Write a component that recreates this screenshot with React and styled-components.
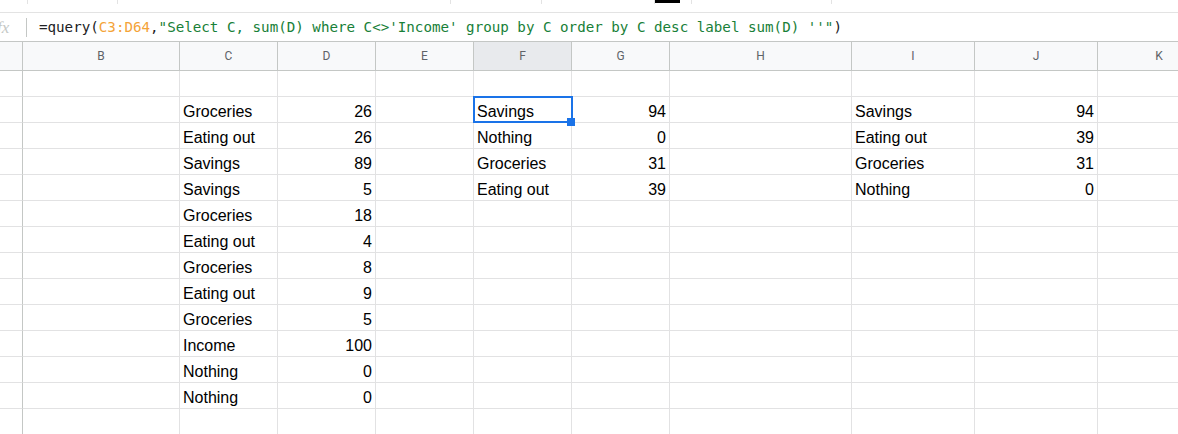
import React from 'react';
import styled, { createGlobalStyle } from 'styled-components';

const GlobalStyle = createGlobalStyle`
  html, body {
    margin: 0;
    padding: 0;
    background: #fff;
  }
`;

const Page = styled.div`
  width: 1178px;
  height: 434px;
  overflow: hidden;
  display: flex;
  flex-direction: column;
  background: #fff;
`;

// thin leftover of the toolbar above the formula bar
const TopStrip = styled.div`
  height: 13px;
  flex: none;
  box-sizing: border-box;
  border-bottom: 1px solid #e3e3e3;
  display: flex;
  align-items: flex-start;
`;

const Seg = styled.div`
  width: ${p => p.w}px;
  height: 4px;
  flex: none;
  box-sizing: border-box;
  border-right: 1px solid #e3e3e3;
`;

const Marker = styled.div`
  width: 25px;
  height: 3px;
  flex: none;
  background: #000;
`;

const FormulaBar = styled.div`
  height: 28px;
  flex: none;
  display: flex;
  align-items: center;
`;

const FxIcon = styled.span`
  width: 24px;
  flex: none;
  margin-left: -3px;
  font-family: "Liberation Serif", serif;
  font-style: italic;
  font-size: 17px;
  color: #c4c7c5;
  line-height: 1;
`;

const Divider = styled.div`
  width: 1px;
  height: 19px;
  background: #c4c7c5;
  margin: 0 12px 0 5px;
  flex: none;
`;

const Formula = styled.div`
  font-family: "DejaVu Sans Mono", "Liberation Mono", monospace;
  font-size: 14.2px;
  color: #202124;
  white-space: nowrap;
`;

const Tok = styled.span`
  color: ${p => (p.kind === 'range' ? '#f4a338' : p.kind === 'str' ? '#188038' : '#202124')};
`;

const Grid = styled.div`
  display: grid;
  grid-template-columns: 23px 157px 98px 98px 98px 98px 98px 182px 123px 123px 123px;
  grid-auto-rows: 26px;
  grid-template-rows: 30px;
`;

const HeadCell = styled.div`
  box-sizing: border-box;
  border-top: 1px solid #c4c7c5;
  border-bottom: 1px solid #c4c7c5;
  border-right: 1px solid #c4c7c5;
  background: ${p => (p.active ? '#e8eaed' : '#f8f9fa')};
  display: flex;
  align-items: center;
  justify-content: center;
  font-family: Roboto, "Liberation Sans", sans-serif;
  font-size: 12px;
  color: #5f6368;
`;

const Cell = styled.div`
  position: relative;
  box-sizing: border-box;
  border-right: 1px solid ${p => (p.rowHead ? '#c4c7c5' : '#e2e2e3')};
  border-bottom: 1px solid #e2e2e3;
  display: flex;
  align-items: flex-end;
  justify-content: ${p => (p.num ? 'flex-end' : 'flex-start')};
  padding: 0 3px 1px 3px;
  font-family: "Liberation Sans", Arial, sans-serif;
  font-size: 16px;
  line-height: 18px;
  color: #000;
  white-space: nowrap;
`;

const Selection = styled.div`
  position: absolute;
  z-index: 2;
  top: -1px;
  left: -1px;
  right: -2px;
  bottom: -1px;
  border: 2px solid #1a73e8;
  pointer-events: none;
`;

// fill handle on the selected cell's corner
const Handle = styled.div`
  position: absolute;
  z-index: 3;
  right: -4px;
  bottom: -4px;
  width: 8px;
  height: 8px;
  background: #1a73e8;
`;

const columns = ['', 'B', 'C', 'D', 'E', 'F', 'G', 'H', 'I', 'J', 'K'];

const source = [
  ['Groceries', 26],
  ['Eating out', 26],
  ['Savings', 89],
  ['Savings', 5],
  ['Groceries', 18],
  ['Eating out', 4],
  ['Groceries', 8],
  ['Eating out', 9],
  ['Groceries', 5],
  ['Income', 100],
  ['Nothing', 0],
  ['Nothing', 0],
];

const grouped = [
  ['Savings', 94],
  ['Nothing', 0],
  ['Groceries', 31],
  ['Eating out', 39],
];

const sorted = [
  ['Savings', 94],
  ['Eating out', 39],
  ['Groceries', 31],
  ['Nothing', 0],
];

// one blank row, 12 data rows, one blank row
function buildRows() {
  const rows = [];
  for (let i = 0; i < 14; i++) {
    const d = i - 1;
    const src = source[d] || ['', ''];
    const grp = grouped[d] || ['', ''];
    const srt = sorted[d] || ['', ''];
    rows.push(['', '', src[0], src[1], '', grp[0], grp[1], '', srt[0], srt[1], '']);
  }
  return rows;
}

const numericCols = [3, 6, 9];

export default function App() {
  const rows = buildRows();
  return (
    <Page>
      <GlobalStyle />
      <TopStrip>
        <Seg w={28} />
        <Seg w={90} />
        <Seg w={333} />
        <Seg w={91} />
        <Seg w={113} />
        <Marker />
        <Seg w={12} />
        <Seg w={140} />
      </TopStrip>

      <FormulaBar>
        <FxIcon>fx</FxIcon>
        <Divider />
        <Formula>
          <Tok>=query(</Tok>
          <Tok kind="range">C3:D64</Tok>
          <Tok>,</Tok>
          <Tok kind="str">"Select C, sum(D) where C&lt;&gt;'Income' group by C order by C desc label sum(D) ''"</Tok>
          <Tok>)</Tok>
        </Formula>
      </FormulaBar>

      <Grid>
        {columns.map((c, i) => (
          <HeadCell key={'h' + i} active={c === 'F'}>{c}</HeadCell>
        ))}
        {rows.map((row, r) =>
          row.map((val, c) => (
            <Cell key={r + '-' + c} rowHead={c === 0} num={numericCols.includes(c)}>
              {val}
              {r === 1 && c === 5 && (
                <>
                  <Selection />
                  <Handle />
                </>
              )}
            </Cell>
          ))
        )}
      </Grid>
    </Page>
  );
}
